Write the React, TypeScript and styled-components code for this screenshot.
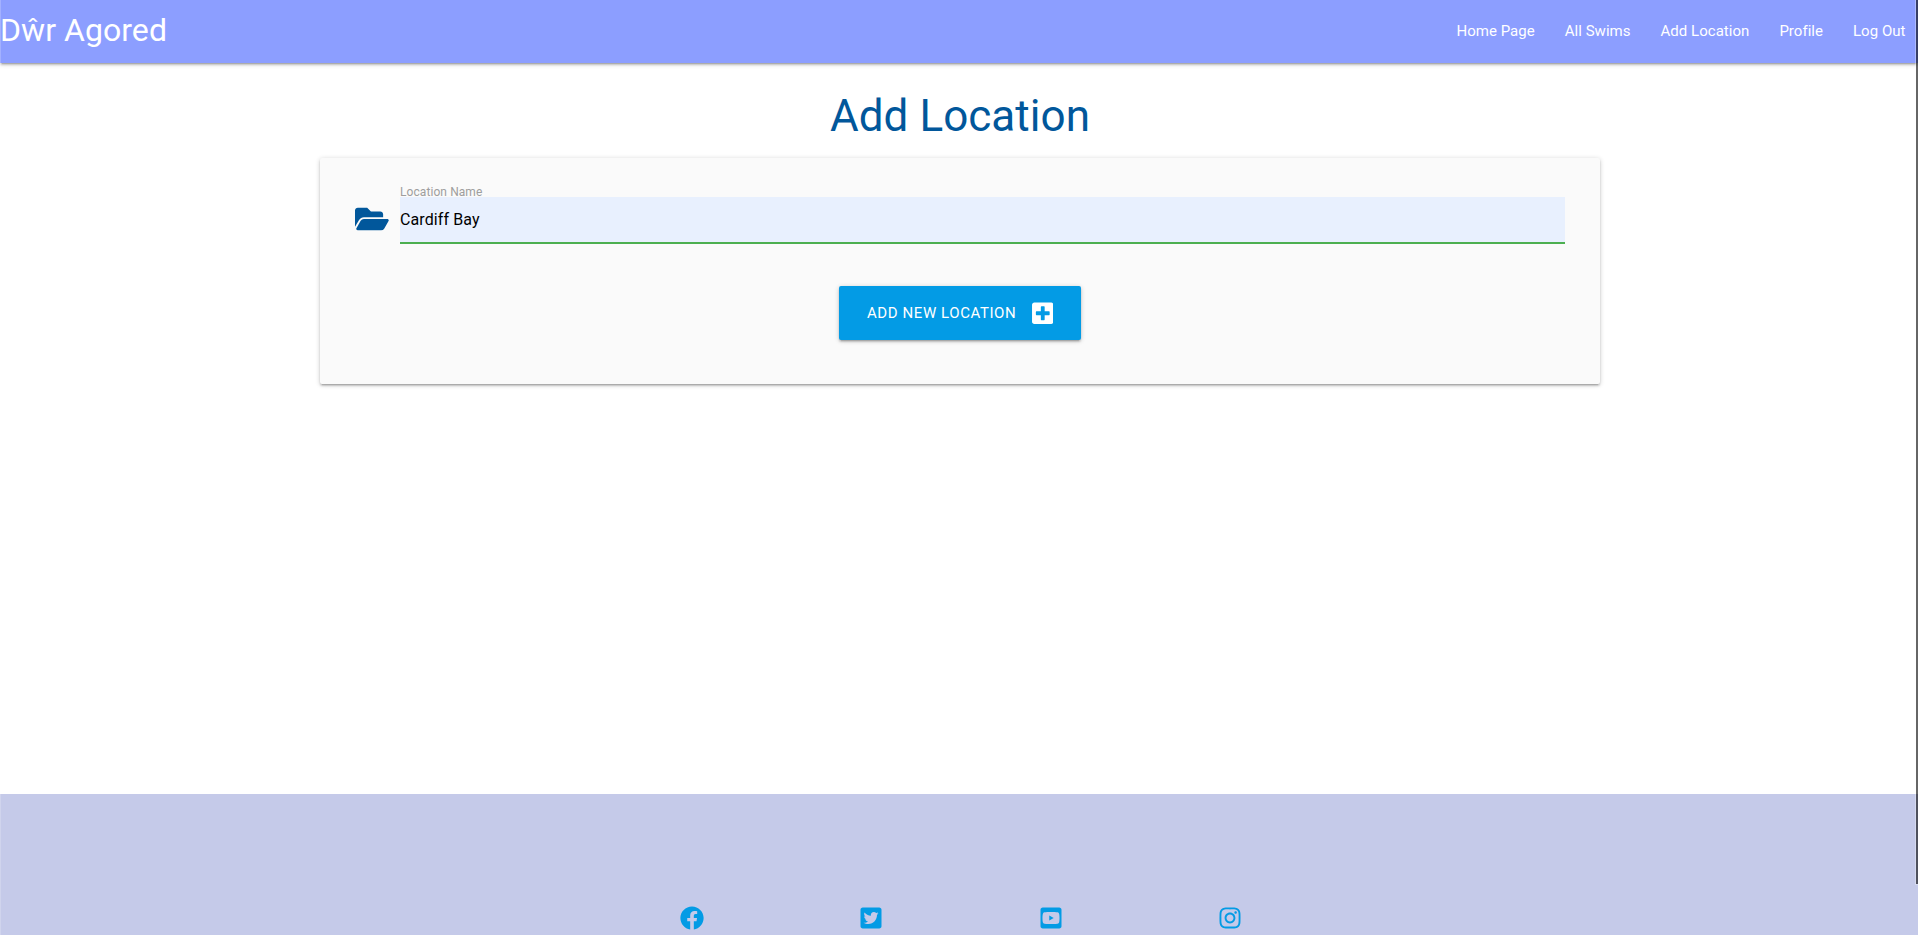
import React from 'react';
import styled, { createGlobalStyle } from 'styled-components';
import { FaFolderOpen, FaPlusSquare, FaFacebook, FaTwitterSquare, FaYoutubeSquare, FaInstagram } from 'react-icons/fa';

const GlobalStyle = createGlobalStyle`
  *, *::before, *::after { box-sizing: border-box; }
  html { font-size: 15px; }
  body {
    margin: 0;
    background: #fff;
    color: rgba(0, 0, 0, 0.87);
    font-family: Roboto, "Liberation Sans", sans-serif;
    line-height: 1.5;
    overflow: hidden;
  }
`;

const raised = '0 2px 2px 0 rgba(0,0,0,.14), 0 3px 1px -2px rgba(0,0,0,.12), 0 1px 5px 0 rgba(0,0,0,.2)';

const Page = styled.div`
  position: relative;
  display: flex;
  flex-direction: column;
  height: 935px;
  overflow: hidden;

  &::before {
    content: '';
    position: absolute;
    inset: 0 auto 0 0;
    width: 1px;
    background: rgba(255, 255, 255, 0.2);
  }
`;

const NavBar = styled.nav`
  display: flex;
  justify-content: space-between;
  flex: none;
  height: 63px;
  background: #8c9eff;
  color: #fff;
  line-height: 62px;
  box-shadow: ${raised};
`;

const Brand = styled.a`
  font-size: 32px;
  line-height: 61px;
  letter-spacing: 0.05px;
`;

const NavList = styled.ul`
  display: flex;
  margin: 0;
  padding: 0;
  list-style: none;

  li:last-child a { padding-right: 12.5px; }
`;

const NavLink = styled.a`
  display: block;
  padding: 0 15px;
  font-size: 15px;
  letter-spacing: 0.03px;
`;

const Main = styled.main`
  flex: 1;
  display: flex;
  flex-direction: column;
  align-items: center;
  padding-left: 2px;
`;

const Title = styled.h3`
  margin: 29px 0 18px;
  height: 48px;
  color: #01579b;
  font-size: 44px;
  font-weight: 400;
  line-height: 48px;
  letter-spacing: 0.05px;
`;

const Card = styled.section`
  display: flex;
  flex-direction: column;
  align-items: center;
  width: 1280px;
  height: 226px;
  padding: 39px 35px 0;
  border-radius: 2px;
  background: #fafafa;
  box-shadow: ${raised};
`;

const FieldRow = styled.div`
  display: flex;
  width: 100%;
  height: 47px;
`;

const FieldIcon = styled.span`
  display: flex;
  align-items: flex-start;
  width: 45px;
  padding-top: 7px;
  color: #01579b;
  font-size: 30px;

  svg { width: 33.75px; }
`;

const Field = styled.div`
  position: relative;
  flex: 1;
`;

const FieldLabel = styled.label`
  position: absolute;
  top: -12.5px;
  left: 0;
  color: #9e9e9e;
  font-size: 15px;
  line-height: 18px;
  letter-spacing: 0.1px;
  transform: scale(0.8);
  transform-origin: 0 0;
`;

const FieldInput = styled.input`
  display: block;
  width: 100%;
  height: 47px;
  padding: 0;
  border: 0;
  border-bottom: 2px solid #4caf50;
  border-radius: 0;
  outline: 0;
  background: #e8f0fe;
  color: #000;
  font: 16px Roboto, "Liberation Sans", sans-serif;
  letter-spacing: 0.1px;
`;

const SubmitButton = styled.button`
  display: flex;
  align-items: center;
  justify-content: space-between;
  width: 242px;
  height: 54px;
  margin-top: 42px;
  padding: 0 28px;
  border: 0;
  border-radius: 2px;
  background: #039be5;
  color: #fff;
  font: 15px Roboto, "Liberation Sans", sans-serif;
  letter-spacing: 0.58px;
  text-transform: uppercase;
  box-shadow: ${raised};

  svg { width: 21.5px; height: 24.5px; }
`;

const Footer = styled.footer`
  display: grid;
  grid-template-columns: repeat(4, 179.2px);
  justify-content: center;
  flex: none;
  height: 141px;
  padding: 112px 0 0 4px;
  background: #c5cae9;
`;

const SocialLink = styled.a`
  display: flex;
  justify-content: center;
  height: 24px;
  color: #039be5;
  font-size: 24px;
`;

const ScrollEdge = styled.div`
  position: absolute;
  top: 0;
  right: 0;
  width: 3px;
  height: 885px;
  border-left: 1px solid rgba(255, 255, 255, 0.3);
  border-bottom: 1px solid rgba(255, 255, 255, 0.3);
  background: rgba(0, 0, 0, 0.6);
  background-clip: padding-box;
`;

const links = ['Home Page', 'All Swims', 'Add Location', 'Profile', 'Log Out'];
const socials = [
  { name: 'Facebook', Icon: FaFacebook },
  { name: 'Twitter', Icon: FaTwitterSquare },
  { name: 'YouTube', Icon: FaYoutubeSquare },
  { name: 'Instagram', Icon: FaInstagram },
];

export default function App() {
  return (
    <Page>
      <GlobalStyle />
      <NavBar>
        <Brand>Dŵr Agored</Brand>
        <NavList>
          {links.map((link) => (
            <li key={link}><NavLink>{link}</NavLink></li>
          ))}
        </NavList>
      </NavBar>
      <Main>
        <Title>Add Location</Title>
        <Card>
          <FieldRow>
            <FieldIcon><FaFolderOpen /></FieldIcon>
            <Field>
              <FieldInput id="location" defaultValue="Cardiff Bay" />
              <FieldLabel htmlFor="location">Location Name</FieldLabel>
            </Field>
          </FieldRow>
          <SubmitButton>Add New Location <FaPlusSquare /></SubmitButton>
        </Card>
      </Main>
      <Footer>
        {socials.map(({ name, Icon }) => (
          <SocialLink key={name} aria-label={name}><Icon /></SocialLink>
        ))}
      </Footer>
      <ScrollEdge />
    </Page>
  );
}
